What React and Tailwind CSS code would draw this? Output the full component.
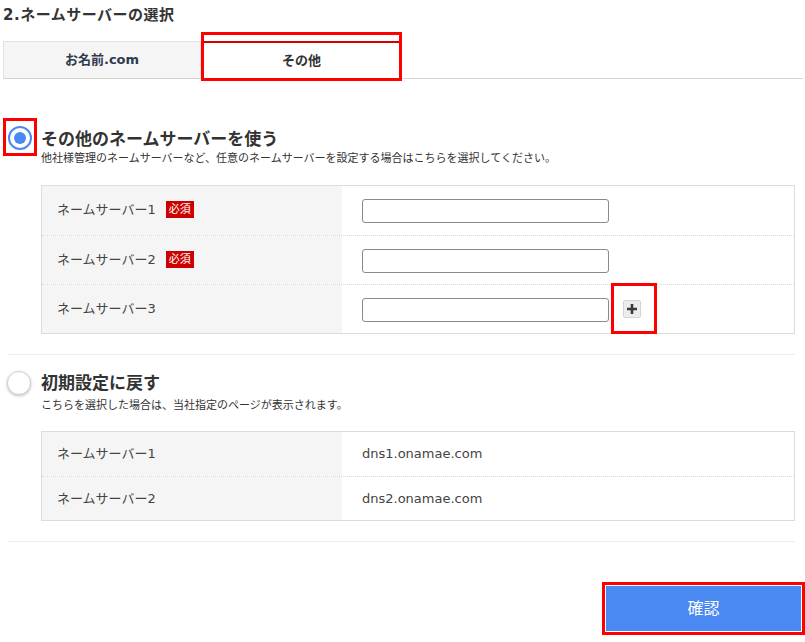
import React from "react";

const font = { fontFamily: '"DejaVu Sans", "Noto Sans CJK JP", sans-serif' };

function Badge() {
  return (
    <span className="ml-[10px] inline-flex h-[17px] items-center bg-[#cc0000] px-[3px] text-[11px] leading-[17px] text-white">
      必須
    </span>
  );
}

function InputRow({ label, required, plus, first }) {
  return (
    <div className={`flex h-[49px] ${first ? "" : "border-t border-dotted border-[#d8d8d8]"}`}>
      <div className="flex w-[300px] items-start bg-[#f5f5f5] pl-[15px] pt-[15px]">
        <span className="text-[13px] leading-[17px] text-[#444]">{label}</span>
        {required && <Badge />}
      </div>
      <div className="flex items-start pl-[20px] pt-[13px]">
        <input
          type="text"
          className="h-[24px] w-[247px] rounded-[3px] border border-[#8a8a8a] bg-white"
        />
        {plus && (
          <div className="relative ml-[14px] mt-[2px]">
            <div className="flex h-[18px] w-[18px] items-center justify-center rounded-[2px] border border-[#d4d4d4] bg-[#ececec]">
              <svg width="12" height="12" viewBox="0 0 12 12">
                <path d="M6 1v10M1 6h10" stroke="#3a3a3a" strokeWidth="2.6" />
              </svg>
            </div>
            <div className="absolute -left-[12px] -top-[17px] h-[51px] w-[46px] border-[3px] border-[#ff0000]" />
          </div>
        )}
      </div>
    </div>
  );
}

function ValueRow({ label, value, first }) {
  return (
    <div className={`flex h-[44px] ${first ? "" : "border-t border-dotted border-[#d8d8d8]"}`}>
      <div className="flex w-[300px] items-center bg-[#f5f5f5] pl-[15px]">
        <span className="text-[13px] text-[#444]">{label}</span>
      </div>
      <div className="flex items-center pl-[20px]">
        <span className="text-[13px] text-[#444]">{value}</span>
      </div>
    </div>
  );
}

export default function App() {
  return (
    <div className="relative h-[642px] w-[805px] overflow-hidden bg-white text-[#333]" style={font}>
      <div className="pl-[3px] pt-[6px] text-[15px] font-bold leading-[18px] tracking-[0.5px] text-[#333]">
        2.ネームサーバーの選択
      </div>

      {/* tabs */}
      <div className="ml-[3px] mr-[2px] mt-[17px] flex h-[38px] border-b border-[#d4d4d4]">
        <div className="flex w-[198px] items-center justify-center border border-b-0 border-[#e2e2e2] bg-[#f5f5f5] text-[13px] font-bold text-[#2f3a4f]">
          お名前.com
        </div>
        <div className="relative flex w-[201px] items-center justify-center border-t-[2px] border-[#d40000] bg-white text-[13px] font-bold text-[#333]">
          その他
          <div className="absolute -bottom-[3px] -top-[11px] left-0 right-0 border-[3px] border-[#ff0000]" />
        </div>
      </div>

      {/* section 1 */}
      <div className="mt-[46px] flex">
        <div className="relative w-[41px]">
          <div className="ml-[8px] mt-[1px] flex h-[24px] w-[24px] items-center justify-center rounded-full border-[2px] border-[#4a88f2] bg-white">
            <div className="h-[12px] w-[12px] rounded-full bg-[#4a88f2]" />
          </div>
          <div className="absolute left-[3px] -top-[7px] h-[38px] w-[34px] border-[3px] border-[#ff0000]" />
        </div>
        <div className="flex-1 pr-[10px]">
          <div className="mt-[2px] text-[17px] font-bold leading-[24px] text-[#333]">
            その他のネームサーバーを使う
          </div>
          <div className="text-[11px] leading-[16px] text-[#333]">
            他社様管理のネームサーバーなど、任意のネームサーバーを設定する場合はこちらを選択してください。
          </div>
          <div className="mt-[18px] w-[754px] border border-[#dcdcdc]">
            <InputRow label="ネームサーバー1" required first />
            <InputRow label="ネームサーバー2" required />
            <InputRow label="ネームサーバー3" plus />
          </div>
        </div>
      </div>

      <div className="ml-[8px] mt-[20px] w-[787px] border-t border-[#ececec]" />

      {/* section 2 */}
      <div className="mt-[15px] flex">
        <div className="w-[41px]">
          <div className="ml-[7px] mt-[1px] h-[24px] w-[24px] rounded-full border border-[#cfcfcf] bg-white shadow-[0_1px_3px_rgba(0,0,0,0.25)]" />
        </div>
        <div className="flex-1">
          <div className="mt-[1px] text-[17px] font-bold leading-[24px] text-[#333]">初期設定に戻す</div>
          <div className="mt-[3px] text-[11px] leading-[16px] text-[#333]">
            こちらを選択した場合は、当社指定のページが表示されます。
          </div>
          <div className="mt-[17px] w-[754px] border border-[#dcdcdc]">
            <ValueRow label="ネームサーバー1" value="dns1.onamae.com" first />
            <ValueRow label="ネームサーバー2" value="dns2.onamae.com" />
          </div>
        </div>
      </div>

      <div className="ml-[8px] mt-[20px] w-[787px] border-t border-[#ececec]" />

      <div className="mt-[40px] flex justify-end">
        <div className="border-[3px] border-[#ff0000] p-[1px]">
          <button className="flex h-[45px] w-[195px] items-center justify-center bg-[#4a88f2] text-[16px] text-white">
            確認
          </button>
        </div>
      </div>
    </div>
  );
}
